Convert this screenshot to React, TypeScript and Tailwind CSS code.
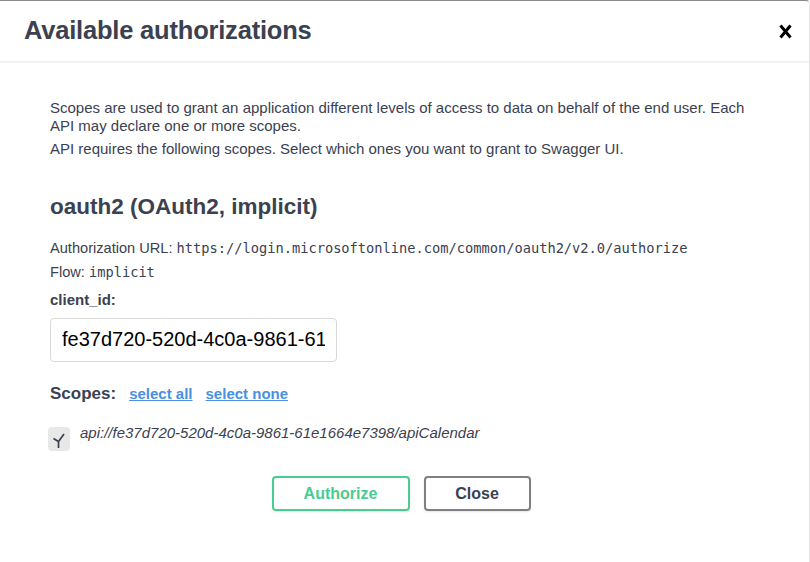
import { useState } from 'react';

const sans = { fontFamily: '"Liberation Sans", Arial, sans-serif' };
const mono = { fontFamily: '"DejaVu Sans Mono", monospace' };

export default function App() {
  const [checked, setChecked] = useState(true);
  const [clientId, setClientId] = useState('fe37d720-520d-4c0a-9861-61e1664e7398');

  return (
    <div
      className="w-[810px] h-[562px] bg-white overflow-hidden border-t border-t-[#8a8a8a] border-r border-r-[#e5e5e5] rounded-tr-[4px] text-[#3b4151]"
      style={sans}
    >
      <div className="h-[62px] flex items-center justify-between pl-6 pr-[17px] border-b-2 border-b-[#f2f2f2]">
        <h3 className="text-[25.5px] font-bold tracking-[-0.2px] leading-none">Available authorizations</h3>
        <button className="w-[14px] h-[16px] flex items-center justify-center text-black mt-[1px]">
          <svg width="13" height="15" viewBox="0 0 13 15">
            <path d="M1.5 1.5 L11.5 13.5 M11.5 1.5 L1.5 13.5" stroke="currentColor" strokeWidth="3" />
          </svg>
        </button>
      </div>

      <div className="px-[50px] pt-[36px]">
        <div className="w-[705px]">
          <p className="text-[15px] leading-[18px]">
            Scopes are used to grant an application different levels of access to data on behalf of the end user. Each
            API may declare one or more scopes.
          </p>
          <p className="text-[15px] leading-[18px] mt-[5px]">
            API requires the following scopes. Select which ones you want to grant to Swagger UI.
          </p>
        </div>

        <h4 className="text-[22.5px] font-bold leading-none mt-[38px]">oauth2 (OAuth2, implicit)</h4>

        <p className="text-[14.6px] leading-[18px] mt-[20px]">
          Authorization URL:{' '}
          <code className="text-[13.7px]" style={mono}>
            https://login.microsoftonline.com/common/oauth2/v2.0/authorize
          </code>
        </p>
        <p className="text-[14.6px] leading-[18px] mt-[6px]">
          Flow:{' '}
          <code className="text-[13.7px]" style={mono}>
            implicit
          </code>
        </p>

        <label className="block text-[15px] font-bold leading-[18px] mt-[10px]">client_id:</label>
        <input
          value={clientId}
          onChange={(e) => setClientId(e.target.value)}
          className="mt-[9px] w-[287px] h-[44px] rounded-[4px] border border-[#d9d9d9] px-[11px] text-[20px] text-black outline-none"
          style={sans}
        />

        <div className="flex items-baseline mt-[19px]">
          <h2 className="text-[17px] font-bold">Scopes:</h2>
          <a className="ml-[13px] text-[15px] font-bold text-[#4990e2] underline cursor-pointer">select all</a>
          <a className="ml-[13px] text-[15px] font-bold text-[#4990e2] underline cursor-pointer">select none</a>
        </div>

        <div className="flex items-start mt-[18px] ml-[-2px]">
          <button
            onClick={() => setChecked(!checked)}
            className="w-[22px] h-[24px] shrink-0 rounded-[4px] bg-[#e8e8e8] flex items-center justify-center mt-[3px]"
          >
            {checked && (
              <svg width="14" height="18" viewBox="0 0 14 18">
                <path d="M1.5 8.5 L6.5 11.5 L12 4 M6.5 11.5 L6.5 18" stroke="#3b4151" strokeWidth="1.7" fill="none" />
              </svg>
            )}
          </button>
          <span className="ml-[10px] text-[15px] italic leading-[18px]">
            api://fe37d720-520d-4c0a-9861-61e1664e7398/apiCalendar
          </span>
        </div>

        <div className="flex justify-center gap-[14px] mt-[25px] ml-[-50px] mr-[-43px]">
          <button className="w-[138px] h-[35px] rounded-[4px] border-2 border-[#49cc90] text-[#49cc90] text-[16px] font-bold shadow-[0_1px_2px_rgba(0,0,0,0.1)]">
            Authorize
          </button>
          <button className="w-[107px] h-[35px] rounded-[4px] border-2 border-[#808080] text-[#3b4151] text-[16px] font-bold shadow-[0_1px_2px_rgba(0,0,0,0.1)]">
            Close
          </button>
        </div>
      </div>
    </div>
  );
}
